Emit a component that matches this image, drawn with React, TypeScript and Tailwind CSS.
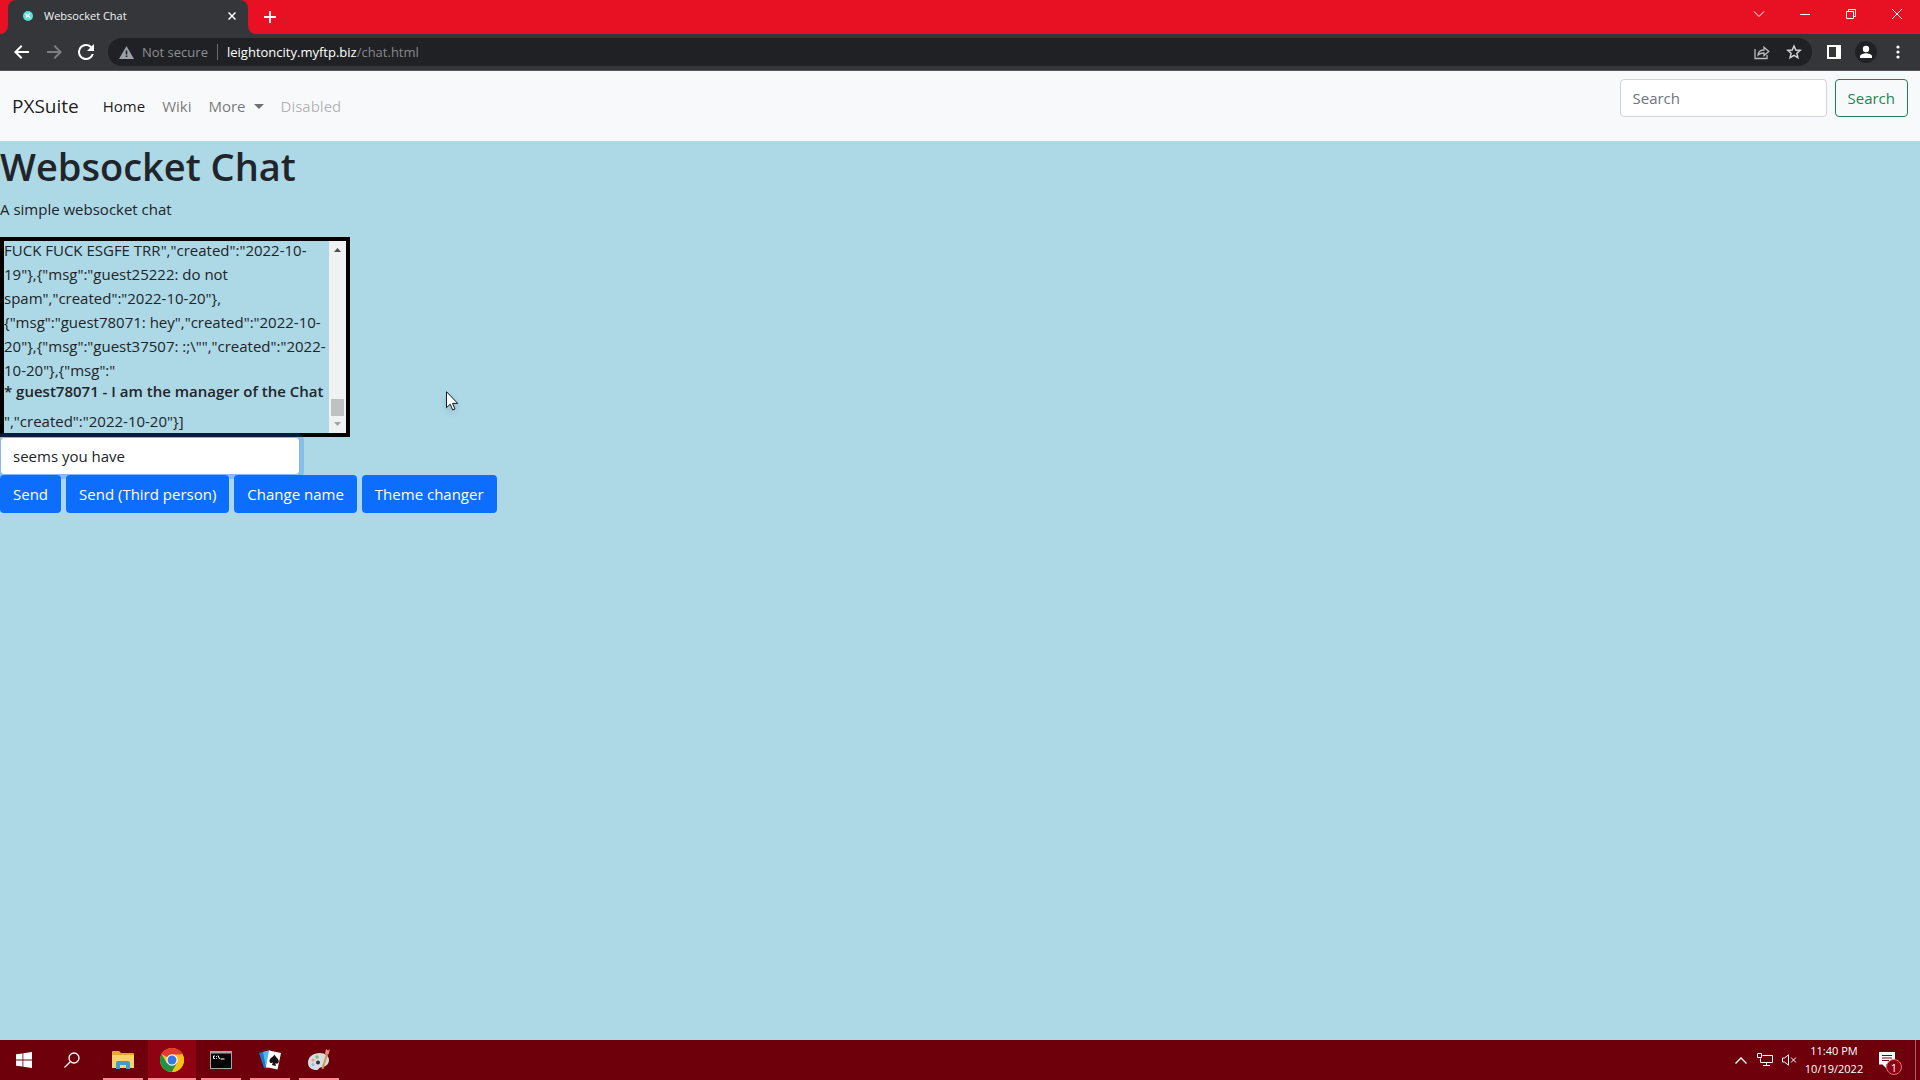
import type { ReactNode } from "react";
import clsx from "clsx";

const chatLines = [
  'FUCK FUCK ESGFE TRR","created":"2022-10-',
  '19"},{"msg":"guest25222: do not',
  'spam","created":"2022-10-20"},',
  '{"msg":"guest78071: hey","created":"2022-10-',
  '20"},{"msg":"guest37507: :;\\"","created":"2022-',
  '10-20"},{"msg":"',
];

const chatActions = ["Send", "Send (Third person)", "Change name", "Theme changer"];

function WindowButton({ label, children }: { label: string; children: ReactNode }) {
  return (
    <button aria-label={label} className="grid h-7 w-[46px] place-items-center">
      <svg width="12" height="12" viewBox="0 0 12 12" fill="none" stroke="#fff" strokeWidth="1">
        {children}
      </svg>
    </button>
  );
}

function TabStrip() {
  return (
    <header className="flex h-[34px] items-start justify-between bg-[#e81123]">
      <div className="flex h-full">
        <div className="w-2 bg-[#35363a]">
          <div className="h-full w-2 rounded-br-lg bg-[#e81123]" />
        </div>
        <div className="bg-[#e81123]">
          <div className="flex h-full w-60 items-center rounded-t-lg bg-[#35363a] pb-1.5 pl-3.5 pt-1">
            <svg width="12" height="12" viewBox="0 0 12 12">
              <circle cx="6" cy="6" r="5" fill="#5fe0d6" />
              <path d="M3.5 4l2 1.5L4 8M8 3L6 6l2.500 2" stroke="#eafffb" strokeWidth="1.300" fill="none" />
            </svg>
            <span className="ml-2.5 flex-1 text-[11px] leading-4 text-[#f1f3f4]">Websocket Chat</span>
            <button aria-label="Close tab" className="mr-2 grid size-4 place-items-center">
              <svg width="8" height="8" viewBox="0 0 8 8" stroke="#fff" strokeWidth="1.500">
                <path d="M.5.5l7 7M7.500.5l-7 7" />
              </svg>
            </button>
          </div>
        </div>
        <div className="w-2 bg-[#35363a]">
          <div className="h-full w-2 rounded-bl-lg bg-[#e81123]" />
        </div>
        <button aria-label="New tab" className="grid w-7 place-items-center">
          <svg width="12" height="12" viewBox="0 0 12 12" stroke="#fff" strokeWidth="1.800">
            <path d="M6 0v12M0 6h12" />
          </svg>
        </button>
      </div>
      <div className="flex">
        <WindowButton label="Search tabs">
          <path d="M1 3.500l5 5 5-5" />
        </WindowButton>
        <WindowButton label="Minimize">
          <path d="M1 6.500h10" />
        </WindowButton>
        <WindowButton label="Restore">
          <path d="M1.500 3.500h7v7h-7zM3.500 3.500v-2h7v7h-2" />
        </WindowButton>
        <WindowButton label="Close">
          <path d="M1 1l10 10M11 1L1 11" />
        </WindowButton>
      </div>
    </header>
  );
}

function ToolbarButton({ label, children }: { label: string; children: ReactNode }) {
  return (
    <button aria-label={label} className="grid size-8 place-items-center">
      {children}
    </button>
  );
}

function Toolbar() {
  return (
    <div className="flex h-[37px] items-center border-b border-[#55565a] bg-[#35363a] px-1.5">
      <ToolbarButton label="Back">
        <svg width="20" height="20" viewBox="2 2 20 20" fill="#fff">
          <path d="M19 11H7.830l4.590-4.590L11 5l-7 7 7 7 1.410-1.410L7.830 13H19z" />
        </svg>
      </ToolbarButton>
      <ToolbarButton label="Forward">
        <svg width="20" height="20" viewBox="2 2 20 20" fill="#7d7e82">
          <path d="M13 5l-1.410 1.410L16.170 11H5v2h11.170l-4.580 4.590L13 19l7-7z" />
        </svg>
      </ToolbarButton>
      <ToolbarButton label="Reload">
        <svg width="18" height="18" viewBox="3 3 18 18" fill="#fff">
          <path d="M17.650 6.350A7.960 7.960 0 0 0 12 4a8 8 0 1 0 7.730 10h-2.080A6 6 0 1 1 12 6c1.660 0 3.140.69 4.220 1.780L13 11h7V4z" />
        </svg>
      </ToolbarButton>
      <div className="mx-1.5 flex h-7 flex-1 items-center rounded-full bg-[#202124] pl-[11px] pr-0.5 text-[13px] leading-5">
        <svg width="15" height="13" viewBox="0 0 15 13">
          <path d="M7.500 0L15 13H0z" fill="#9aa0a6" />
          <path d="M7.500 4.500v4M7.500 9.500V11" stroke="#202124" strokeWidth="1.600" />
        </svg>
        <span className="ml-2 w-[68px] whitespace-nowrap text-[#8b8f94]">Not secure</span>
        <span className="mx-[7px] h-4 w-px bg-[#6a6c70]" />
        <div role="textbox" aria-label="Address" className="flex-1 whitespace-nowrap pl-0.5 text-[#85888c]">
          <span className="text-white">leightoncity.myftp.biz</span>/chat.html
        </div>
        <ToolbarButton label="Share this page">
          <svg width="16" height="16" viewBox="0 0 16 16" fill="none" stroke="#b8bbbf" strokeWidth="1.300">
            <path d="M1 5v9.500h12V11" />
            <path d="M4 11c.3-3.500 2.500-5 6-5V3.200L14.800 7.500 10 11.500V9C7.500 9 5.500 9.500 4 11z" />
          </svg>
        </ToolbarButton>
        <ToolbarButton label="Bookmark this tab">
          <svg width="16" height="16" viewBox="0 0 16 16" fill="none" stroke="#d0d2d5" strokeWidth="1.500">
            <path d="M8 2l1.800 4 4.400.4-3.300 2.900 1 4.300L8 11.300l-3.900 2.300 1-4.300L1.800 6.400 6.200 6z" />
          </svg>
        </ToolbarButton>
      </div>
      <ToolbarButton label="Side panel">
        <svg width="14" height="14" viewBox="0 0 14 14">
          <path d="M1 1h12v12H1z" fill="none" stroke="#fff" strokeWidth="2" />
          <path d="M9 1h4v12H9z" fill="#fff" />
        </svg>
      </ToolbarButton>
      <ToolbarButton label="Profile">
        <svg width="22" height="22" viewBox="0 0 22 22">
          <circle cx="11" cy="11" r="11" fill="#202124" />
          <circle cx="11" cy="8" r="3.200" fill="#fff" />
          <path d="M5 17v-1.800c0-2 4-3 6-3s6 1 6 3V17z" fill="#fff" />
        </svg>
      </ToolbarButton>
      <ToolbarButton label="Menu">
        <svg width="4" height="14" viewBox="0 0 4 14" fill="#fff">
          <circle cx="2" cy="2" r="1.600" />
          <circle cx="2" cy="7" r="1.600" />
          <circle cx="2" cy="12" r="1.600" />
        </svg>
      </ToolbarButton>
    </div>
  );
}

function Navbar() {
  return (
    <nav className="flex items-center bg-[#f8f9fa] px-3 py-2">
      <a href="#" className="mr-4 text-[19px] leading-[30px] text-black/90">PXSuite</a>
      <div className="flex flex-1 items-center gap-px">
        <a href="#" className="px-2 text-black/90">Home</a>
        <a href="#" className="px-2 text-black/55">Wiki</a>
        <button className="flex items-center px-2 text-black/55">
          More
          <svg width="10" height="5" viewBox="0 0 10 5" className="ml-2" fill="currentColor">
            <path d="M0 0h10L5 5z" />
          </svg>
        </button>
        <span aria-disabled="true" className="px-2 text-black/30">Disabled</span>
      </div>
      <form className="flex gap-2 pb-4" onSubmit={(e) => e.preventDefault()}>
        <input
          type="search"
          aria-label="Search"
          placeholder="Search"
          className="h-[38px] w-[207px] rounded border border-[#ced4da] bg-white px-3 placeholder:text-[#6c757d]"
        />
        <button className="h-[38px] rounded border border-[#198754] px-3 text-[#198754]">Search</button>
      </form>
    </nav>
  );
}

function ChatLog() {
  return (
    <div className="flex h-[200px] w-[350px] border-4 border-black">
      <div className="flex min-w-0 flex-1 flex-col justify-end overflow-hidden whitespace-pre">
        {chatLines.map((line) => (
          <p key={line} className="shrink-0">{line}</p>
        ))}
        <h6 className="mb-2 shrink-0 font-semibold leading-[19px]">* guest78071 - I am the manager of the Chat</h6>
        <p className="shrink-0">","created":"2022-10-20"{"}]"}</p>
      </div>
      <div className="flex w-[17px] flex-col items-center bg-[#f1f1f1]">
        <svg width="7" height="17" viewBox="0 0 7 17" fill="#505050">
          <path d="M0 11l3.500-4L7 11z" />
        </svg>
        <div className="mt-auto h-[17px] w-[13px] bg-[#c1c1c1]" />
        <svg width="7" height="17" viewBox="0 0 7 17" fill="#a3a3a3">
          <path d="M0 6l3.500 4L7 6z" />
        </svg>
      </div>
    </div>
  );
}

function ChatPage() {
  return (
    <main className="flex-1 bg-[#add8e6]">
      <h1 className="mb-1.5 text-[38px] font-semibold leading-[50px]">Websocket Chat</h1>
      <p className="mb-4">A simple websocket chat</p>
      <ChatLog />
      <input
        aria-label="Message"
        defaultValue="seems you have"
        className="block h-[38px] w-[300px] rounded border border-[#86b7fe] bg-white px-3 ring-4 ring-[#0d6efd]/25"
      />
      <div className="flex gap-[5px]">
        {chatActions.map((label) => (
          <button key={label} className="h-[38px] rounded bg-[#0d6efd] px-[13px] text-white">{label}</button>
        ))}
      </div>
    </main>
  );
}

function TaskButton({ label, active, children }: { label: string; active?: boolean; children: ReactNode }) {
  return (
    <button
      aria-label={label}
      className={clsx("flex h-full w-12 flex-col items-center", active && "bg-[#8f0212]")}
    >
      <span className="grid flex-1 place-items-center pt-0.5">{children}</span>
      <span className={clsx("h-0.5 bg-[#ff8b95]", active ? "w-full" : "w-10")} />
    </button>
  );
}

function Taskbar() {
  return (
    <footer className="flex h-10 items-stretch justify-between bg-[#6e000b]">
      <div className="flex">
        <button aria-label="Start" className="grid w-12 place-items-center">
          <svg width="16" height="16" viewBox="0 0 16 16" fill="#fff">
            <path d="M0 2.300l6.500-.9v6.100H0zM7.300 1.300L16 0v7.500H7.300zM0 8.400h6.500v6.200L0 13.700zM7.300 8.400H16V16l-8.700-1.300z" />
          </svg>
        </button>
        <button aria-label="Search" className="mr-[3px] grid w-12 place-items-center">
          <svg width="16" height="16" viewBox="0 0 16 16" fill="none" stroke="#fff" strokeWidth="1.300">
            <circle cx="10" cy="6" r="5" />
            <path d="M6.300 9.700L.5 15.500" />
          </svg>
        </button>
        <div className="flex gap-px">
          <TaskButton label="File Explorer">
            <svg width="22" height="18" viewBox="0 0 22 18">
              <path d="M0 1a1 1 0 0 1 1-1h6l2 2h12a1 1 0 0 1 1 1v14H0z" fill="#e6a82e" />
              <path d="M0 4h22v13H0z" fill="#fbd367" />
              <path d="M4 18v-6a2 2 0 0 1 2-2h10a2 2 0 0 1 2 2v6h-4v-4H8v4z" fill="#3f9bd8" />
            </svg>
          </TaskButton>
          <TaskButton label="Google Chrome" active>
            <svg width="24" height="24" viewBox="0 0 24 24">
              <circle cx="12" cy="12" r="12" fill="#fbc116" />
              <path d="M12 12L1.600 6A12 12 0 0 1 22.400 6z" fill="#e33b2e" />
              <path d="M1.600 6A12 12 0 0 0 12 24l5.200-9L12 12 6.800 15z" fill="#229342" />
              <path d="M12 6.500h10.600A12 12 0 0 1 12 24l5-9z" fill="#fbc116" />
              <circle cx="12" cy="12" r="5.700" fill="#fff" />
              <circle cx="12" cy="12" r="4.500" fill="#3b78e7" />
            </svg>
          </TaskButton>
          <TaskButton label="Command Prompt">
            <svg width="22" height="18" viewBox="0 0 22 18">
              <path d="M0 0h22v18H0z" fill="#a5a5a5" />
              <path d="M1 2.500h20V17H1z" fill="#050505" />
              <path d="M5 5H3.500v2.500H5M6.500 5v.8M6.500 7v.8M8 4.500l1.500 3.500M10.500 8h4" stroke="#fff" fill="none" />
            </svg>
          </TaskButton>
          <TaskButton label="Solitaire">
            <svg width="22" height="20" viewBox="0 0 22 20">
              <path d="M0 3l7-2 4 16-6 1z" fill="#1479c9" />
              <path d="M4 2l7-2 3 17-7 1z" fill="#58b3ee" />
              <path d="M10 .5L22 3l-3.500 16.500L7 17z" fill="#fff" />
              <path d="M15.500 4.500c-1 2.500-5 3.500-5 6.500 0 2.200 2.500 2.600 3.600 1.200l-1.200 2.900 4 .9-.5-3.200c1 1.600 3.400.8 3.400-1.200 0-3-3.300-4.300-4.300-7.100z" fill="#111" />
            </svg>
          </TaskButton>
          <TaskButton label="Paint">
            <svg width="24" height="24" viewBox="0 0 24 24">
              <path d="M13 5C6 5 1 9 1 14.500 1 20 5 22 9.500 22c2.500 0 2-2 4-2.500 4-1 8.500-2 8.500-7.500 0-4-4-7-9-7z" fill="#d9dde0" />
              <circle cx="6" cy="12" r="1.600" fill="#e89a92" />
              <circle cx="10" cy="9" r="1.700" fill="#78c078" />
              <circle cx="6" cy="16.500" r="1.500" fill="#8abbe4" />
              <circle cx="11" cy="14.500" r="2" fill="#30343a" />
              <path d="M19 6l2 .5L16.500 21l-2-.5z" fill="#c99a5a" />
              <path d="M18 6l1-5 2 1.500 2-1.500-1.500 5.500z" fill="#e88a78" />
            </svg>
          </TaskButton>
        </div>
      </div>
      <div className="flex items-center text-[11px] leading-[18px] text-white">
        <button aria-label="Show hidden icons" className="grid h-full w-6 place-items-center">
          <svg width="12" height="7" viewBox="0 0 12 7" fill="none" stroke="#fff" strokeWidth="1.300">
            <path d="M.5 6.500L6 1l5.500 5.500" />
          </svg>
        </button>
        <button aria-label="Network" className="grid h-full w-6 place-items-center">
          <svg width="16" height="14" viewBox="0 0 16 14" fill="none" stroke="#fff">
            <path d="M5.500 2.500h10v7H3.500v-4M9.500 9.500v3M6 12.500h7M.5.5h4v4h-4z" />
          </svg>
        </button>
        <button aria-label="Volume muted" className="grid h-full w-6 place-items-center">
          <svg width="15" height="12" viewBox="0 0 15 12" fill="none" stroke="#fff">
            <path d="M.5 4h2L6.500.8v10.400L2.500 8h-2zM9 3.500l5 5M14 3.500l-5 5" />
          </svg>
        </button>
        <button className="w-[66px] text-center">
          11:40 PM
          <br />
          10/19/2022
        </button>
        <button aria-label="1 new notification" className="relative grid h-full w-10 place-items-center">
          <svg width="16" height="16" viewBox="0 0 16 16">
            <path d="M0 0h16v12.500H7V16l-3.500-3.500H0z" fill="#fff" />
            <path d="M3 3.500h10M3 6h10M3 8.500h7" stroke="#6e000b" />
          </svg>
          <span className="absolute left-[19px] top-[19px] grid size-4 place-items-center rounded-full border border-[#e0707c] bg-[#8f0212] leading-none">
            1
          </span>
        </button>
        <button aria-label="Show desktop" className="ml-2 h-full w-[5px] border-l border-[#a8606a]" />
      </div>
    </footer>
  );
}

function Cursor() {
  return (
    <svg className="pointer-events-none absolute left-[446px] top-[391px] drop-shadow-md" width="13" height="20" viewBox="0 0 13 20">
      <path d="M.5.700v16l3.700-3.500 2.500 5.800 2.300-1-2.500-5.600h5.200z" fill="#fff" stroke="#111827" />
    </svg>
  );
}

export default function App() {
  return (
    <div className="relative flex min-h-screen flex-col font-['Open_Sans',sans-serif] text-[15px] leading-6 text-[#212529]">
      <TabStrip />
      <Toolbar />
      <Navbar />
      <ChatPage />
      <Taskbar />
      <Cursor />
    </div>
  );
}
